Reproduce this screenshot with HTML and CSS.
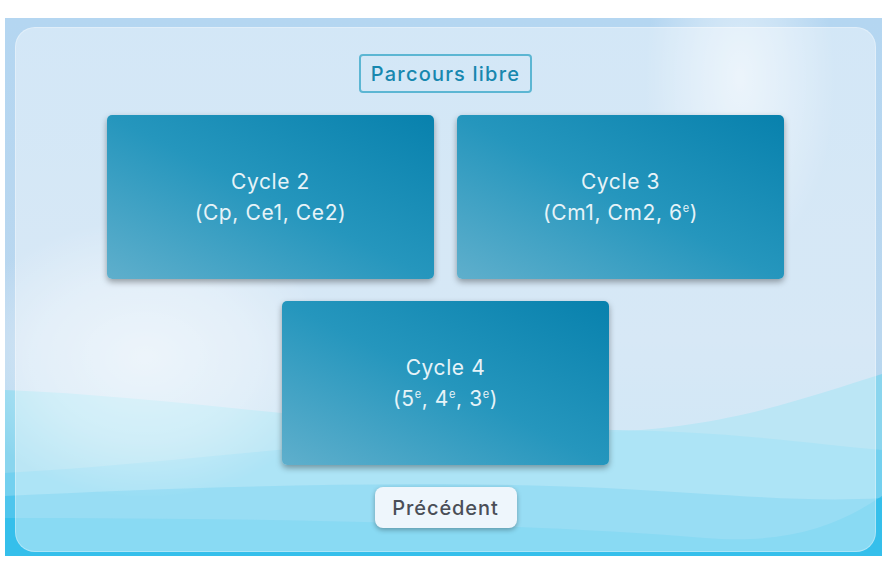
FILE: index.html
```html
<!DOCTYPE html>
<html>
    <head>
        <title>Parcours libre</title>
        <link rel="stylesheet" href="styles.css">
    </head>
    <body>
        <div class="scene">
            <svg class="waves" viewBox="0 0 877 538" preserveAspectRatio="none" aria-hidden="true">
                <defs>
                    <linearGradient id="sky" x1="0" y1="0" x2="0" y2="1">
                        <stop offset="0" stop-color="#b4d6f1"/>
                        <stop offset="0.6" stop-color="#bad7ef"/>
                        <stop offset="1" stop-color="#a9d6f0"/>
                    </linearGradient>
                    <radialGradient id="glowLeft" cx="0.5" cy="0.5" r="0.5">
                        <stop offset="0" stop-color="#ffffff" stop-opacity="0.55"/>
                        <stop offset="0.6" stop-color="#ffffff" stop-opacity="0.3"/>
                        <stop offset="1" stop-color="#ffffff" stop-opacity="0"/>
                    </radialGradient>
                    <radialGradient id="glowRight" cx="0.5" cy="0.5" r="0.5">
                        <stop offset="0" stop-color="#ffffff" stop-opacity="0.55"/>
                        <stop offset="0.5" stop-color="#ffffff" stop-opacity="0.3"/>
                        <stop offset="1" stop-color="#ffffff" stop-opacity="0"/>
                    </radialGradient>
                </defs>
                <rect width="877" height="538" fill="url(#sky)"/>
                <ellipse cx="735" cy="60" rx="95" ry="190" fill="url(#glowRight)"/>
                <path d="M0 372 C 200 380 420 420 600 414 C 720 410 800 380 877 356 L 877 538 L 0 538 Z" fill="#8ad5ee"/>
                <path d="M0 455 C 180 445 360 418 560 412 C 700 410 800 425 877 432 L 877 538 L 0 538 Z" fill="#6fcfee" opacity="0.85"/>
                <path d="M0 478 C 200 468 420 462 600 470 C 720 476 800 485 877 480 L 877 538 L 0 538 Z" fill="#45c2ec" opacity="0.8"/>
                <path d="M0 500 C 250 500 520 505 700 520 C 780 526 830 510 877 478 L 877 538 L 0 538 Z" fill="#2bbce9" opacity="0.7"/>
                <ellipse cx="140" cy="340" rx="190" ry="140" fill="url(#glowLeft)"/>
            </svg>
            <div class="panel">
                <div class="mode">Parcours libre</div>
                <div class="cycles">
                    <a class="cycle" href="#"><span>Cycle 2<br>(Cp, Ce1, Ce2)</span></a>
                    <a class="cycle" href="#"><span>Cycle 3<br>(Cm1, Cm2, 6<sup>e</sup>)</span></a>
                    <a class="cycle" href="#"><span>Cycle 4<br>(5<sup>e</sup>, 4<sup>e</sup>, 3<sup>e</sup>)</span></a>
                </div>
                <button class="back">Précédent</button>
            </div>
        </div>
    </body>
</html>
```
FILE: styles.css
```css
body {
	margin: 0;
	background-color: #ffffff;
	font-family: "Inter", "Noto Sans", sans-serif;
}

.scene {
	position: relative;
	width: 877px;
	height: 538px;
	margin: 18px 0 0 5px;
	overflow: hidden;
}

.waves {
	position: absolute;
	top: 0;
	left: 0;
	width: 100%;
	height: 100%;
}

.panel {
	position: relative;
	box-sizing: border-box;
	width: 861px;
	height: 525px;
	margin: 9px 0 0 10px;
	padding-top: 26px;
	border-radius: 20px;
	background-color: rgba(255, 255, 255, 0.42);
	border: 1px solid rgba(255, 255, 255, 0.3);
	display: flex;
	flex-direction: column;
	align-items: center;
	gap: 22px;
}

.mode {
	box-sizing: border-box;
	height: 39px;
	width: 173px;
	border: 2px solid #5cb6d3;
	border-radius: 4px;
	color: #1787af;
	font-size: 20px;
	font-weight: 500;
	letter-spacing: 1.2px;
	display: flex;
	align-items: center;
	justify-content: center;
}

.cycles {
	width: 677px;
	display: flex;
	flex-wrap: wrap;
	justify-content: center;
	gap: 22px 23px;
}

.cycle {
	width: 327px;
	height: 164px;
	border-radius: 5px;
	background: linear-gradient(to top right, #5fafcc, #2596bd 50%, #0881ad);
	box-shadow: 0 3px 6px rgba(0, 0, 0, 0.35);
	color: #e6f3f8;
	font-size: 21px;
	letter-spacing: 0.6px;
	line-height: 31px;
	text-align: center;
	text-decoration: none;
	display: flex;
	align-items: center;
	justify-content: center;
}

.cycle sup {
	font-size: 11px;
	line-height: 0;
	vertical-align: 8px;
}

.back {
	height: 41px;
	width: 142px;
	border: none;
	border-radius: 8px;
	background-color: #eef6fc;
	box-shadow: 0 2px 5px rgba(0, 0, 0, 0.3);
	color: #4a4e57;
	font-family: inherit;
	font-size: 20px;
	font-weight: 500;
	letter-spacing: 0.9px;
	cursor: pointer;
}
```
